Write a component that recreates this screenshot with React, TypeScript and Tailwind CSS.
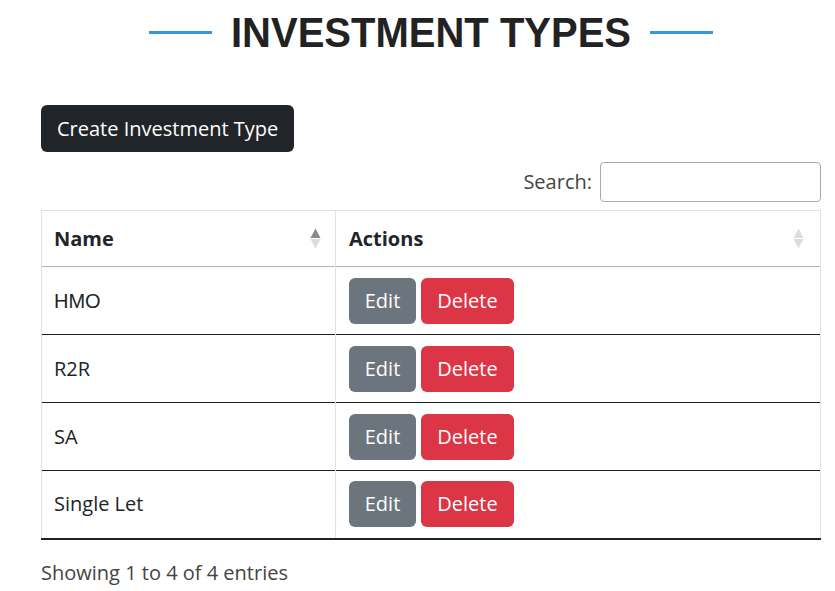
import { useState } from "react";

const rows = [
  { name: "HMO", arial: true },
  { name: "R2R" },
  { name: "SA" },
  { name: "Single Let" },
];

const openSans = "font-['Open_Sans',sans-serif]";

function SortIcon({ active }: { active?: boolean }) {
  return (
    <svg width="11" height="21" viewBox="0 0 11 21" className="shrink-0">
      <polygon points="5.5,0.5 10.5,10 0.5,10" fill={active ? "#8a8a8a" : "#dcdcdc"} />
      <polygon points="5.5,20.5 10.5,11 0.5,11" fill="#dcdcdc" />
    </svg>
  );
}

export default function App() {
  const [query, setQuery] = useState("");
  const visible = rows.filter((r) =>
    r.name.toLowerCase().includes(query.toLowerCase())
  );

  return (
    <div className={`w-[835px] min-h-[591px] bg-white ${openSans} text-[#212529]`}>
      <div className="ml-[41px] w-[780px]">
        {/* Title */}
        <div className="flex items-center justify-center gap-[19px] pt-[9px]">
          <span className="w-[63px] h-[3px] bg-[#3498db]" />
          <h1 className="font-['Liberation_Sans',Arial,sans-serif] font-bold text-[40px] leading-[47px] text-[#222] scale-y-[1.05]">
            INVESTMENT TYPES
          </h1>
          <span className="w-[63px] h-[3px] bg-[#3498db]" />
        </div>

        {/* Create button */}
        <button className="mt-[49px] h-[47px] px-[16px] rounded-[6px] bg-[#212529] text-white text-[20px] leading-none">
          Create Investment Type
        </button>

        {/* Search */}
        <div className="flex items-center justify-end gap-[8px] mt-[10px]">
          <label className="text-[20px] text-[#444]">Search:</label>
          <input
            value={query}
            onChange={(e) => setQuery(e.target.value)}
            className="w-[221px] h-[40px] rounded-[4px] border border-[#a9a9a9] px-2 outline-none"
          />
        </div>

        {/* Table */}
        <table className="mt-[8px] w-[780px] border-collapse table-fixed text-[20px]">
          <colgroup>
            <col className="w-[294px]" />
            <col />
          </colgroup>
          <thead>
            <tr className="h-[56px] border-t border-[#dee2e6] border-b border-b-[#b5b5b5]">
              <th className="border-l border-r border-[#dee2e6] text-left font-bold pl-[12px] pr-[14px]">
                <div className="flex items-center justify-between">
                  <span>Name</span>
                  <SortIcon active />
                </div>
              </th>
              <th className="border-r border-[#dee2e6] text-left font-bold pl-[13px] pr-[16px]">
                <div className="flex items-center justify-between">
                  <span>Actions</span>
                  <SortIcon />
                </div>
              </th>
            </tr>
          </thead>
          <tbody>
            {visible.map((r, i) => (
              <tr
                key={r.name}
                className={`h-[68px] ${
                  i === visible.length - 1
                    ? "border-b-2 border-b-[#222]"
                    : "border-b border-b-[#222]"
                }`}
              >
                <td
                  className={`border-l border-r border-[#dee2e6] pl-[12px] ${
                    r.arial ? "font-['Liberation_Sans',Arial,sans-serif]" : ""
                  }`}
                >
                  {r.name}
                </td>
                <td className="border-r border-[#dee2e6] pl-[13px]">
                  <div className="flex gap-[5px]">
                    <button className="w-[67px] h-[46px] rounded-[6px] bg-[#6c757d] text-white text-[20px]">
                      Edit
                    </button>
                    <button className="w-[93px] h-[46px] rounded-[6px] bg-[#dc3545] text-white text-[20px]">
                      Delete
                    </button>
                  </div>
                </td>
              </tr>
            ))}
          </tbody>
        </table>

        <p className="mt-[18px] text-[20px] text-[#444]">
          Showing 1 to {visible.length} of 4 entries
        </p>
      </div>
    </div>
  );
}
